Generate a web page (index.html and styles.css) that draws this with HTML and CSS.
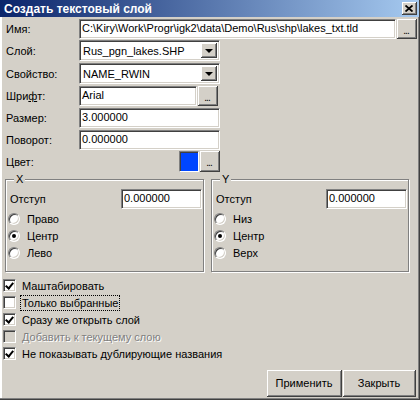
FILE: index.html
```html
<!DOCTYPE html>
<html lang="ru">
<head>
    <meta charset="UTF-8">
    <title>Создать текстовый слой</title>
    <link rel="stylesheet" href="styles.css">
</head>
<body>
    <div class="window">
        <div class="titlebar">
            <span class="title">Создать текстовый слой</span>
            <span class="close-btn">
                <svg width="8" height="7" viewBox="0 0 8 7">
                    <path d="M0.5 0.5 L7.5 6.5 M7.5 0.5 L0.5 6.5" stroke="#000" stroke-width="1.8"/>
                </svg>
            </span>
        </div>
        <div class="content">
            <div class="form">
                <div class="row">
                    <span class="lbl">Имя:</span>
                    <div class="edit wide">C:\Kiry\Work\Progr\igk2\data\Demo\Rus\shp\lakes_txt.tld</div>
                    <button class="btn dots">...</button>
                </div>
                <div class="row tight">
                    <span class="lbl">Слой:</span>
                    <div class="combo"><span class="combo-text">Rus_pgn_lakes.SHP</span><span class="drop"></span></div>
                </div>
                <div class="row">
                    <span class="lbl">Свойство:</span>
                    <div class="combo"><span class="combo-text">NAME_RWIN</span><span class="drop"></span></div>
                </div>
                <div class="row">
                    <span class="lbl">Шри<u>ф</u>т:</span>
                    <div class="edit font-edit">Arial</div>
                    <button class="btn dots small">...</button>
                </div>
                <div class="row">
                    <span class="lbl">Размер:</span>
                    <div class="edit num">3.000000</div>
                </div>
                <div class="row">
                    <span class="lbl">Поворот:</span>
                    <div class="edit num">0.000000</div>
                </div>
                <div class="row tight color-row">
                    <span class="lbl">Цвет:</span>
                    <div class="swatch"></div>
                    <button class="btn dots small">...</button>
                </div>
            </div>

            <div class="groups">
                <fieldset class="group">
                    <legend>X</legend>
                    <div class="offset-row">
                        <span>Отступ</span>
                        <div class="edit offset">0.000000</div>
                    </div>
                    <div class="radio"><span class="dot"></span>Право</div>
                    <div class="radio"><span class="dot on"></span>Центр</div>
                    <div class="radio"><span class="dot"></span>Лево</div>
                </fieldset>
                <fieldset class="group group-y">
                    <legend>Y</legend>
                    <div class="offset-row">
                        <span>Отступ</span>
                        <div class="edit offset">0.000000</div>
                    </div>
                    <div class="radio"><span class="dot"></span>Низ</div>
                    <div class="radio"><span class="dot on"></span>Центр</div>
                    <div class="radio"><span class="dot"></span>Верх</div>
                </fieldset>
            </div>

            <div class="checks">
                <div class="check"><span class="box on"></span>Маштабировать</div>
                <div class="check"><span class="box"></span><span class="focused">Только выбранные</span></div>
                <div class="check"><span class="box on"></span>Сразу же открыть слой</div>
                <div class="check disabled"><span class="box"></span>Добавить к текущему слою</div>
                <div class="check"><span class="box on"></span>Не показывать дублирующие названия</div>
            </div>

            <div class="actions">
                <button class="btn action">Применить</button>
                <button class="btn action close">Закрыть</button>
            </div>
        </div>
    </div>
</body>
</html>
```

FILE: styles.css
```css
html, body {
    margin: 0;
    padding: 0;
    background: #d4d0c8;
}
body {
    font-family: 'Liberation Sans', Arial, sans-serif;
    font-size: 11px;
    color: #000;
}
.window {
    width: 420px;
    height: 400px;
    box-sizing: border-box;
    display: flex;
    flex-direction: column;
    background: #d4d0c8;
    border-right: 1px solid #404040;
    border-bottom: 1px solid #404040;
    box-shadow: inset -1px -1px #808080, inset 2px 0 #fff, inset 1px 0 #d4d0c8;
}
.titlebar {
    height: 17px;
    flex: none;
    display: flex;
    align-items: center;
    justify-content: space-between;
    padding: 0 2px 0 4px;
    background: linear-gradient(to right, #0a246a, #a6caf0);
}
.title {
    color: #fff;
    font-weight: bold;
    font-size: 12px;
}
.close-btn {
    width: 14px;
    height: 12px;
    display: flex;
    align-items: center;
    justify-content: center;
    background: #d4d0c8;
    border-right: 1px solid #404040;
    border-bottom: 1px solid #404040;
    box-shadow: inset 1px 1px #fff, inset -1px -1px #808080;
}
.content {
    flex: 1;
    display: flex;
    flex-direction: column;
    padding: 2px 0 0 2px;
}

/* labelled rows */
.form {
    display: flex;
    flex-direction: column;
    padding-left: 4px;
}
.row {
    display: flex;
    align-items: center;
    margin-top: 2px;
}
.row:first-child { margin-top: 0; }
.row.tight { margin-top: 1px; }
.lbl {
    width: 73px;
    flex: none;
}
.edit {
    box-sizing: border-box;
    height: 20px;
    line-height: 16px;
    padding-left: 2px;
    background: #fff;
    border: 1px solid;
    border-color: #808080 #fff #fff #808080;
    box-shadow: inset 1px 1px #404040, inset -1px -1px #d4d0c8;
    white-space: nowrap;
    overflow: hidden;
}
.edit.wide { width: 317px; }
.edit.font-edit { width: 118px; margin-right: 1px; }
.edit.num { width: 141px; }
.combo {
    box-sizing: border-box;
    width: 141px;
    height: 21px;
    display: flex;
    align-items: center;
    padding: 0 2px 0 2px;
    background: #fff;
    border: 1px solid;
    border-color: #808080 #fff #fff #808080;
    box-shadow: inset 1px 1px #404040, inset -1px -1px #d4d0c8;
}
.combo-text {
    flex: 1;
    padding-left: 1px;
}
.drop {
    width: 16px;
    height: 15px;
    box-sizing: border-box;
    display: flex;
    align-items: center;
    justify-content: center;
    background: #d4d0c8;
    border-right: 1px solid #404040;
    border-bottom: 1px solid #404040;
    box-shadow: inset 1px 1px #fff, inset -1px -1px #808080;
}
.drop::after {
    content: '';
    border-left: 4px solid transparent;
    border-right: 4px solid transparent;
    border-top: 4px solid #000;
    margin-top: 1px;
}
.btn {
    font: inherit;
    color: #000;
    background: #d4d0c8;
    padding: 0;
    margin: 0;
    box-sizing: border-box;
    border: none;
    border-right: 1px solid #404040;
    border-bottom: 1px solid #404040;
    box-shadow: inset 1px 1px #fff, inset -1px -1px #808080;
}
.btn.dots {
    width: 20px;
    height: 20px;
    margin-left: 1px;
    font-size: 10px;
    line-height: 14px;
    letter-spacing: -1px;
    padding: 4px 1px 0 0;
}
.btn.dots.small {
    width: 20px;
    margin-left: 0;
}
.color-row .btn.dots {
    height: 21px;
}
.swatch {
    box-sizing: border-box;
    width: 20px;
    height: 21px;
    margin-left: 100px;
    margin-right: 1px;
    background: #0046ff;
    border: 1px solid;
    border-color: #808080 #fff #fff #808080;
    box-shadow: inset 1px 1px #404040;
}

/* X / Y group boxes */
.groups {
    display: flex;
    margin-top: 1px;
    padding-left: 3px;
}
.group {
    box-sizing: border-box;
    width: 199px;
    height: 99px;
    margin: 0;
    padding: 3px 0 0 4px;
    border: 1px solid #808080;
    box-shadow: inset 1px 1px #fff, 1px 1px #fff;
}
.group-y {
    margin-left: 7px;
    width: 198px;
}
.group legend {
    margin-left: 4px;
    padding: 0 2px;
    line-height: 13px;
    background: #d4d0c8;
}
.offset-row {
    display: flex;
    align-items: center;
    justify-content: space-between;
    padding-right: 1px;
    margin-bottom: 1px;
}
.edit.offset { width: 81px; }
.radio {
    height: 17px;
    display: flex;
    align-items: center;
    margin-left: -2px;
}
.dot {
    width: 12px;
    height: 12px;
    box-sizing: border-box;
    margin-right: 7px;
    border-radius: 50%;
    background: #fff;
    border: 1px solid;
    border-color: #808080 #fff #fff #808080;
    box-shadow: inset 1px 1px #404040, inset -1px -1px #d4d0c8;
    display: flex;
    align-items: center;
    justify-content: center;
}
.dot.on::after {
    content: '';
    width: 4px;
    height: 4px;
    border-radius: 50%;
    background: #000;
}

/* checkbox list */
.checks {
    display: flex;
    flex-direction: column;
    margin-top: 5px;
    padding-left: 1px;
}
.check {
    height: 17px;
    display: flex;
    align-items: center;
}
.box {
    width: 13px;
    height: 13px;
    box-sizing: border-box;
    margin-right: 6px;
    background: #fff;
    border: 1px solid;
    border-color: #808080 #fff #fff #808080;
    box-shadow: inset 1px 1px #404040, inset -1px -1px #d4d0c8;
    position: relative;
}
.box.on::after {
    content: '';
    position: absolute;
    left: 3px;
    top: 1px;
    width: 3px;
    height: 6px;
    border-right: 2px solid #000;
    border-bottom: 2px solid #000;
    transform: rotate(40deg);
}
.focused {
    outline: 1px dotted #000;
    outline-offset: 1px;
}
.check.disabled {
    color: #808080;
    text-shadow: 1px 1px #fff;
}
.check.disabled .box {
    background: #d4d0c8;
}

/* bottom buttons */
.actions {
    margin-top: auto;
    display: flex;
    justify-content: flex-end;
    padding: 0 3px 2px 0;
}
.btn.action {
    width: 75px;
    height: 27px;
}
.btn.action.close {
    width: 73px;
    margin-left: 1px;
}
```
